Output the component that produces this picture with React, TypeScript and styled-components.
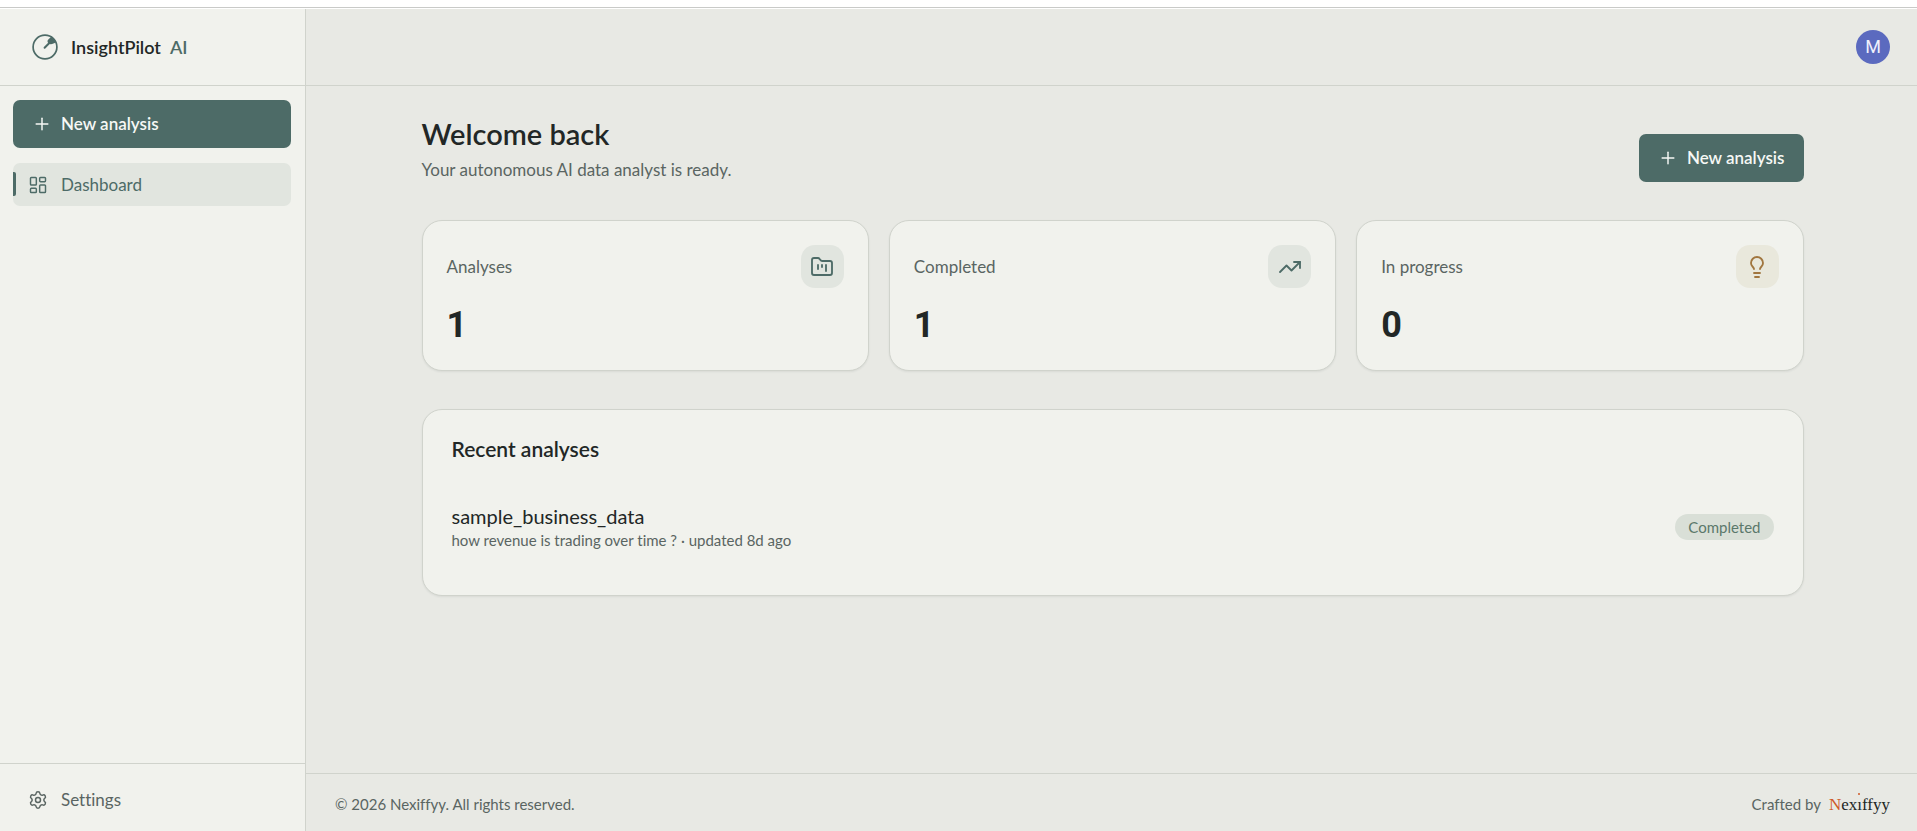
import React from "react";
import styled, { createGlobalStyle, ThemeProvider } from "styled-components";
import {
  FolderKanban,
  LayoutDashboard,
  Lightbulb,
  Plus,
  Settings,
  TrendingUp,
  type LucideIcon,
} from "lucide-react";

const theme = {
  page: "#e8e9e4",
  surface: "#f1f2ed",
  border: "#d0d3cc",
  ink: "#222726",
  muted: "#5a6562",
  primary: "#4d6b67",
  primarySoft: "#e1e5df",
  sage: "#5b786b",
  sageSoft: "#d9dfd7",
  amber: "#a1763f",
  amberSoft: "#e9e8dc",
  avatar: "#5b6abf",
  rust: "#cf5a28",
};

const GlobalStyle = createGlobalStyle`
  *, *::before, *::after { box-sizing: border-box; }
  body {
    margin: 0;
    background: #fff;
    color: ${theme.ink};
    font-family: Lato, "Liberation Sans", sans-serif;
    font-size: 17px;
    font-variant-ligatures: none;
    line-height: 24px;
  }
  button { font: inherit; font-variant-ligatures: none; cursor: pointer; }
  a { color: inherit; text-decoration: none; }
  h1, h2, p, dl, dt, dd, ul { margin: 0; padding: 0; }
`;

const Page = styled.div`
  display: flex;
  flex-direction: column;
  min-height: 100vh;
  padding-top: 7px;
`;

const TopRule = styled.div`
  height: 2px;
  border-top: 1px solid #c9cac8;
`;

const Shell = styled.div`
  flex: 1;
  display: grid;
  grid-template-columns: 306px minmax(0, 1fr);
  background: ${(p) => p.theme.page};
`;

const Sidebar = styled.aside`
  display: flex;
  flex-direction: column;
  background: ${(p) => p.theme.surface};
  border-right: 1px solid ${(p) => p.theme.border};
`;

const Brand = styled.a`
  display: flex;
  align-items: center;
  gap: 13px;
  height: 77px;
  padding: 0 32px;
  border-bottom: 1px solid ${(p) => p.theme.border};
  font-size: 18px;
  font-weight: 600;
`;

const BrandName = styled.span`
  display: flex;
  gap: 9px;
`;

const BrandAccent = styled.span`
  color: ${(p) => p.theme.primary};
`;

const Nav = styled.nav`
  flex: 1;
  display: flex;
  flex-direction: column;
  gap: 15px;
  padding: 14px 14px 14px 13px;
`;

const PrimaryButton = styled.button`
  display: flex;
  align-items: center;
  gap: 9px;
  height: 48px;
  padding: 0 19px;
  border: 0;
  border-radius: 7px;
  background: ${(p) => p.theme.primary};
  color: #f6f8f5;
  font-weight: 600;
  white-space: nowrap;
`;

const NavLink = styled.a<{ $active?: boolean }>`
  position: relative;
  display: flex;
  align-items: center;
  gap: 13px;
  height: 43px;
  padding: 0 15px;
  border-radius: 7px;
  background: ${(p) => (p.$active ? p.theme.primarySoft : "transparent")};
  color: ${(p) => (p.$active ? p.theme.primary : p.theme.muted)};

  &::before {
    content: "";
    display: ${(p) => (p.$active ? "block" : "none")};
    position: absolute;
    left: 0;
    top: 9px;
    bottom: 10px;
    width: 3px;
    border-radius: 0 2px 2px 0;
    background: ${(p) => p.theme.primary};
  }
`;

const SidebarFooter = styled.div`
  padding: 14px 14px 10px 13px;
  border-top: 1px solid ${(p) => p.theme.border};
`;

const Column = styled.div`
  display: flex;
  flex-direction: column;
`;

const TopBar = styled.header`
  display: flex;
  align-items: center;
  justify-content: flex-end;
  height: 77px;
  padding: 0 27px;
  border-bottom: 1px solid ${(p) => p.theme.border};
`;

const Avatar = styled.button`
  width: 34px;
  height: 34px;
  padding: 0;
  border: 0;
  border-radius: 50%;
  background: ${(p) => p.theme.avatar};
  color: #eef0fb;
  font-family: Roboto, sans-serif;
  font-size: 18px;
`;

const Content = styled.main`
  flex: 1;
  display: flex;
  flex-direction: column;
  gap: 38px;
  width: 100%;
  max-width: 1440px;
  margin: 0 auto;
  padding: 29px 28px 29px 30px;
`;

const Intro = styled.section`
  display: flex;
  flex-wrap: wrap;
  align-items: flex-end;
  justify-content: space-between;
  gap: 16px;
`;

const Title = styled.h1`
  margin-bottom: 5px;
  font-size: 29px;
  font-weight: 600;
  line-height: 38px;
`;

const Subtitle = styled.p`
  color: ${(p) => p.theme.muted};
`;

const Stats = styled.dl`
  display: grid;
  grid-template-columns: repeat(auto-fit, minmax(260px, 1fr));
  gap: 20px;
`;

const Card = styled.div`
  background: ${(p) => p.theme.surface};
  border: 1px solid ${(p) => p.theme.border};
  border-radius: 20px;
  box-shadow: 0 1px 2px rgba(40, 50, 45, 0.08);
`;

const StatCard = styled(Card)`
  padding: 24px;
`;

const StatLabel = styled.dt`
  display: flex;
  align-items: center;
  justify-content: space-between;
  margin-bottom: 16px;
  color: ${(p) => p.theme.muted};
`;

const StatIcon = styled.span<{ $amber?: boolean }>`
  display: grid;
  place-items: center;
  width: 43px;
  height: 43px;
  border-radius: 14px;
  background: ${(p) => (p.$amber ? p.theme.amberSoft : p.theme.primarySoft)};
  color: ${(p) => (p.$amber ? p.theme.amber : p.theme.primary)};
`;

const StatValue = styled.dd`
  font-family: Roboto, sans-serif;
  font-size: 36px;
  font-weight: 700;
  line-height: 42px;
`;

const RecentCard = styled(Card)`
  padding: 27px 29px 24px;
`;

const SectionTitle = styled.h2`
  margin-bottom: 24px;
  font-size: 21px;
  font-weight: 600;
  line-height: 24px;
`;

const RecentList = styled.ul`
  list-style: none;
`;

const RecentRow = styled.a`
  display: flex;
  align-items: center;
  justify-content: space-between;
  gap: 16px;
  padding: 18px 0 20px;
`;

const RecentName = styled.p`
  font-size: 20px;
  line-height: 26px;
`;

const RecentMeta = styled.p`
  color: ${(p) => p.theme.muted};
  font-size: 15px;
  line-height: 22px;
`;

const Badge = styled.span`
  padding: 3px 13px;
  border-radius: 13px;
  background: ${(p) => p.theme.sageSoft};
  color: ${(p) => p.theme.sage};
  font-size: 15px;
  line-height: 20px;
`;

const Footer = styled.footer`
  display: flex;
  align-items: center;
  justify-content: space-between;
  height: 58px;
  padding: 3px 27px 0 29px;
  border-top: 1px solid ${(p) => p.theme.border};
  color: ${(p) => p.theme.muted};
  font-size: 15px;
`;

const Credit = styled.span`
  display: flex;
  align-items: baseline;
  gap: 8px;
`;

const Wordmark = styled.a`
  color: ${(p) => p.theme.ink};
  font-family: "Liberation Serif", serif;
  font-size: 17px;
`;

const WordmarkInitial = styled.span`
  color: ${(p) => p.theme.rust};
`;

const WordmarkI = styled.span`
  position: relative;

  &::after {
    content: "";
    position: absolute;
    top: -2px;
    left: 1px;
    width: 2px;
    height: 2px;
    border-radius: 1px;
    background: ${(p) => p.theme.rust};
  }
`;

function LogoMark() {
  return (
    <svg width="26" height="26" viewBox="0 0 26 26" fill="none" aria-hidden="true">
      <circle cx="13" cy="13" r="11.9" stroke={theme.primary} strokeWidth="1.7" />
      <path d="M12.6 13.8 17.6 8.8" stroke={theme.primary} strokeWidth="2" strokeLinecap="round" />
      <path
        d="M19.4 2.6C18.6 3.4 15.6 6 15.5 7.2c-.1 1.6 1.5 3.1 3.4 3C20.2 10.1 22.7 9 23.7 8.2 23 6.2 21.5 4 19.4 2.6Z"
        fill={theme.primary}
      />
    </svg>
  );
}

interface Stat {
  label: string;
  value: number;
  icon: LucideIcon;
  amber?: boolean;
}

const stats: Stat[] = [
  { label: "Analyses", value: 1, icon: FolderKanban },
  { label: "Completed", value: 1, icon: TrendingUp },
  { label: "In progress", value: 0, icon: Lightbulb, amber: true },
];

const recent = [
  {
    name: "sample_business_data",
    meta: "how revenue is trading over time ? · updated 8d ago",
    status: "Completed",
  },
];

export default function App() {
  return (
    <ThemeProvider theme={theme}>
      <GlobalStyle />
      <Page>
        <TopRule />
        <Shell>
          <Sidebar>
            <Brand href="#">
              <LogoMark />
              <BrandName>
                <span>InsightPilot</span>
                <BrandAccent>AI</BrandAccent>
              </BrandName>
            </Brand>
            <Nav>
              <PrimaryButton type="button">
                <Plus size={20} strokeWidth={1.75} />
                New analysis
              </PrimaryButton>
              <NavLink href="#dashboard" $active aria-current="page">
                <LayoutDashboard size={20} strokeWidth={1.75} />
                Dashboard
              </NavLink>
            </Nav>
            <SidebarFooter>
              <NavLink href="#settings">
                <Settings size={20} strokeWidth={1.75} />
                Settings
              </NavLink>
            </SidebarFooter>
          </Sidebar>
          <Column>
            <TopBar>
              <Avatar type="button">M</Avatar>
            </TopBar>
            <Content>
              <Intro>
                <div>
                  <Title>Welcome back</Title>
                  <Subtitle>Your autonomous AI data analyst is ready.</Subtitle>
                </div>
                <PrimaryButton type="button">
                  <Plus size={20} strokeWidth={1.75} />
                  New analysis
                </PrimaryButton>
              </Intro>
              <Stats>
                {stats.map(({ label, value, icon: Icon, amber }) => (
                  <StatCard key={label}>
                    <StatLabel>
                      {label}
                      <StatIcon $amber={amber}>
                        <Icon size={24} strokeWidth={1.85} />
                      </StatIcon>
                    </StatLabel>
                    <StatValue>{value}</StatValue>
                  </StatCard>
                ))}
              </Stats>
              <RecentCard as="section">
                <SectionTitle>Recent analyses</SectionTitle>
                <RecentList>
                  {recent.map((item) => (
                    <li key={item.name}>
                      <RecentRow href="#analysis">
                        <div>
                          <RecentName>{item.name}</RecentName>
                          <RecentMeta>{item.meta}</RecentMeta>
                        </div>
                        <Badge>{item.status}</Badge>
                      </RecentRow>
                    </li>
                  ))}
                </RecentList>
              </RecentCard>
            </Content>
            <Footer>
              <span>© 2026 Nexiffyy. All rights reserved.</span>
              <Credit>
                Crafted by
                <Wordmark href="#nexiffyy">
                  <WordmarkInitial>N</WordmarkInitial>ex<WordmarkI>ı</WordmarkI>ffyy
                </Wordmark>
              </Credit>
            </Footer>
          </Column>
        </Shell>
      </Page>
    </ThemeProvider>
  );
}
